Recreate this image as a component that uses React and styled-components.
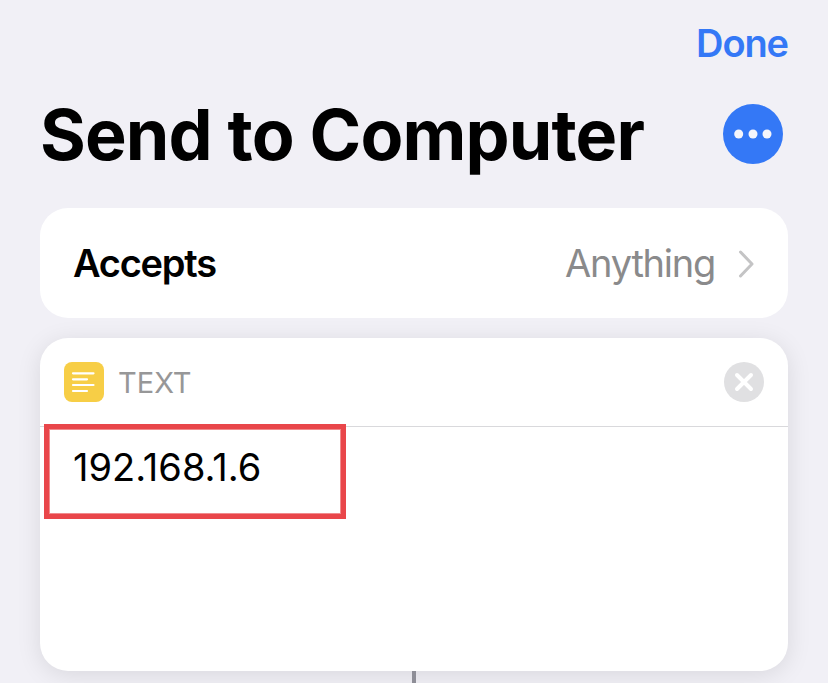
import React from 'react';
import styled, { createGlobalStyle } from 'styled-components';

const Global = createGlobalStyle`
  * { box-sizing: border-box; }
  body { margin: 0; background: #f1f0f6; font-family: Inter, "Liberation Sans", sans-serif; overflow: hidden; }
`;
const Screen = styled.main`
  width: 828px; height: 683px; padding: 0 40px; background: #f1f0f6;
  display: flex; flex-direction: column; overflow: hidden;
`;
const NavBar = styled.nav`
  height: 86px; display: flex; justify-content: flex-end; align-items: center;
`;
const DoneButton = styled.button`
  border: 0; padding: 0; background: none; font: 600 38px Inter, sans-serif; color: #3478f6; letter-spacing: -1.1px;
`;
const TitleRow = styled.header`
  height: 122px; display: flex; justify-content: space-between; align-items: flex-start; padding: 18px 5px 0 0;
`;
const Title = styled.h1`
  margin: -1px 0 0; font-size: 70px; line-height: 64px; font-weight: 700; letter-spacing: -0.85px; color: #000; white-space: nowrap;
`;
const MoreButton = styled.button`
  width: 60px; height: 60px; padding: 0; border: 0; border-radius: 50%; background: #3478f6;
  svg { display: block; }
`;
const AcceptsCard = styled.section`
  height: 110px; flex: none; border-radius: 28px; background: #fff; padding: 0 33px;
  display: flex; align-items: center;
`;
const AcceptsLabel = styled.span`font-size: 38px; line-height: 46px; font-weight: 600; flex: 1; letter-spacing: -1.25px;`;
const AcceptsValue = styled.span`font-size: 38px; line-height: 46px; color: #8a8a8b; margin-right: 23px; letter-spacing: -1.25px;`;
const ActionCard = styled.section`
  height: 333px; flex: none; margin-top: 20px; border-radius: 28px; background: #fff;
  box-shadow: 0 4px 24px rgba(0, 0, 0, 0.1);
`;
const ActionHeader = styled.header`
  height: 89px; border-bottom: 1px solid #d9d9dc; padding: 0 24px; display: flex; align-items: center;
`;
const ActionName = styled.span`flex: 1; margin-left: 14px; font-size: 29px; font-weight: 400; color: #979798;`;
const TextField = styled.div`
  position: relative; height: 244px; padding: 17px 33px; font-size: 38px; line-height: 46px;
`;
const Highlight = styled.div`
  position: absolute; left: 4px; top: -3px; width: 302px; height: 95px; border: 5px solid #e9464a;
  box-shadow: inset 0 0 0 1px #f08b8d;
`;
const Connector = styled.div`width: 4px; height: 12px; margin-left: 372px; background: #8e8e97;`;

export default function App() {
  return (
    <Screen>
      <Global />
      <NavBar><DoneButton>Done</DoneButton></NavBar>
      <TitleRow>
        <Title>Send to Computer</Title>
        <MoreButton aria-label="More">
          <svg width="60" height="60" fill="#f5f5fb"><circle cx="15.7" cy="30" r="4.5" /><circle cx="30" cy="30" r="4.5" /><circle cx="44" cy="30" r="4.5" /></svg>
        </MoreButton>
      </TitleRow>
      <AcceptsCard>
        <AcceptsLabel>Accepts</AcceptsLabel>
        <AcceptsValue>Anything</AcceptsValue>
        <svg width="17" height="30" fill="none" stroke="#c4c4c5" strokeWidth="3" strokeLinecap="round" strokeLinejoin="round"><path d="M2.5 4L14 16L2.5 28" /></svg>
      </AcceptsCard>
      <ActionCard>
        <ActionHeader>
          <svg width="40" height="40"><rect width="40" height="40" rx="8" fill="#f7ce46" /><path d="M9 11.3H29.5M9 17.3H23M9 23H29.5M9 29H23" stroke="#fff" strokeWidth="2.2" strokeLinecap="round" /></svg>
          <ActionName>TEXT</ActionName>
          <svg width="40" height="40"><circle cx="20" cy="20" r="20" fill="#e0e0e2" /><path d="M13 13L27 27M27 13L13 27" stroke="#fff" strokeWidth="4" strokeLinecap="round" /></svg>
        </ActionHeader>
        <TextField>192.168.1.6<Highlight /></TextField>
      </ActionCard>
      <Connector />
    </Screen>
  );
}
